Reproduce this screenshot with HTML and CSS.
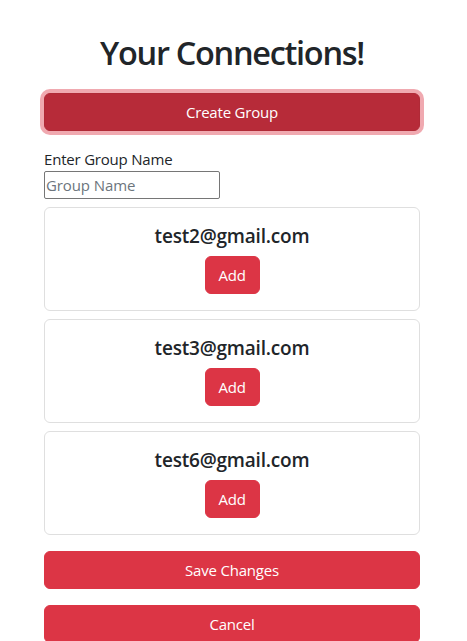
FILE: index.html
```html
<!DOCTYPE html>
<html lang="en">
<head>
<meta charset="utf-8">
<title>Your Connections!</title>
<link rel="stylesheet" href="styles.css">
</head>
<body>
<main class="page">
  <h1 class="title">Your Connections!</h1>
  <button class="btn btn-block btn-active">Create Group</button>
  <label class="label" for="gname">Enter Group Name</label>
  <input id="gname" class="input" type="text" placeholder="Group Name">
  <div class="card">
    <h5 class="email">test2@gmail.com</h5>
    <button class="btn btn-small">Add</button>
  </div>
  <div class="card">
    <h5 class="email">test3@gmail.com</h5>
    <button class="btn btn-small">Add</button>
  </div>
  <div class="card">
    <h5 class="email">test6@gmail.com</h5>
    <button class="btn btn-small">Add</button>
  </div>
  <button class="btn btn-block btn-save">Save Changes</button>
  <button class="btn btn-block">Cancel</button>
</main>
</body>
</html>
```

FILE: styles.css
```css
* { box-sizing: border-box; }
html, body { margin: 0; padding: 0; background: #fff; }
body {
  font-family: "Open Sans", "Noto Sans", sans-serif;
  font-size: 16px;
  line-height: 1.5;
  color: #212529;
}
.page {
  width: 420px;
  padding: 29px 0 0 44px;
  display: flex;
  flex-direction: column;
  align-items: flex-start;
}
.title {
  align-self: stretch;
  margin: 0 0 16px;
  font-size: 32.5px;
  font-weight: 600;
  line-height: 48px;
  text-align: center;
  letter-spacing: -1.3px;
}
.btn {
  font-family: inherit;
  font-size: 15px;
  line-height: 24px;
  color: #fff;
  background: #dc3545;
  border: 1px solid #dc3545;
  border-radius: 6px;
  padding: 6px 12px;
  text-align: center;
  cursor: pointer;
  letter-spacing: -0.2px;
}
.btn-block {
  align-self: stretch;
  height: 38px;
}
.btn-active {
  background: #b72b39;
  border-color: #b02a37;
  box-shadow: 0 0 0 4px rgba(225, 83, 97, 0.5);
  margin-bottom: 16px;
}
.label {
  display: block;
  line-height: 24px;
  font-size: 15px;
  letter-spacing: -0.2px;
}
.input {
  width: 176px;
  height: 28px;
  font-family: inherit;
  font-size: 15px;
  letter-spacing: -0.1px;
  padding: 1px 1px;
  border: 1px solid #767676;
  border-radius: 2px;
  color: #212529;
  margin-bottom: 8px;
}
.input::placeholder { color: #6c757d; }
.card {
  align-self: stretch;
  border: 1px solid #dfdfdf;
  border-radius: 6px;
  padding: 16px;
  margin-bottom: 8px;
  display: flex;
  flex-direction: column;
  align-items: center;
}
.email {
  margin: 0 0 8px;
  font-size: 19px;
  font-weight: 600;
  line-height: 24px;
  letter-spacing: -0.2px;
}
.btn-small {
  height: 38px;
  width: 55px;
  padding: 6px 0;
}
.btn-save {
  margin-top: 8px;
  margin-bottom: 16px;
}
```
